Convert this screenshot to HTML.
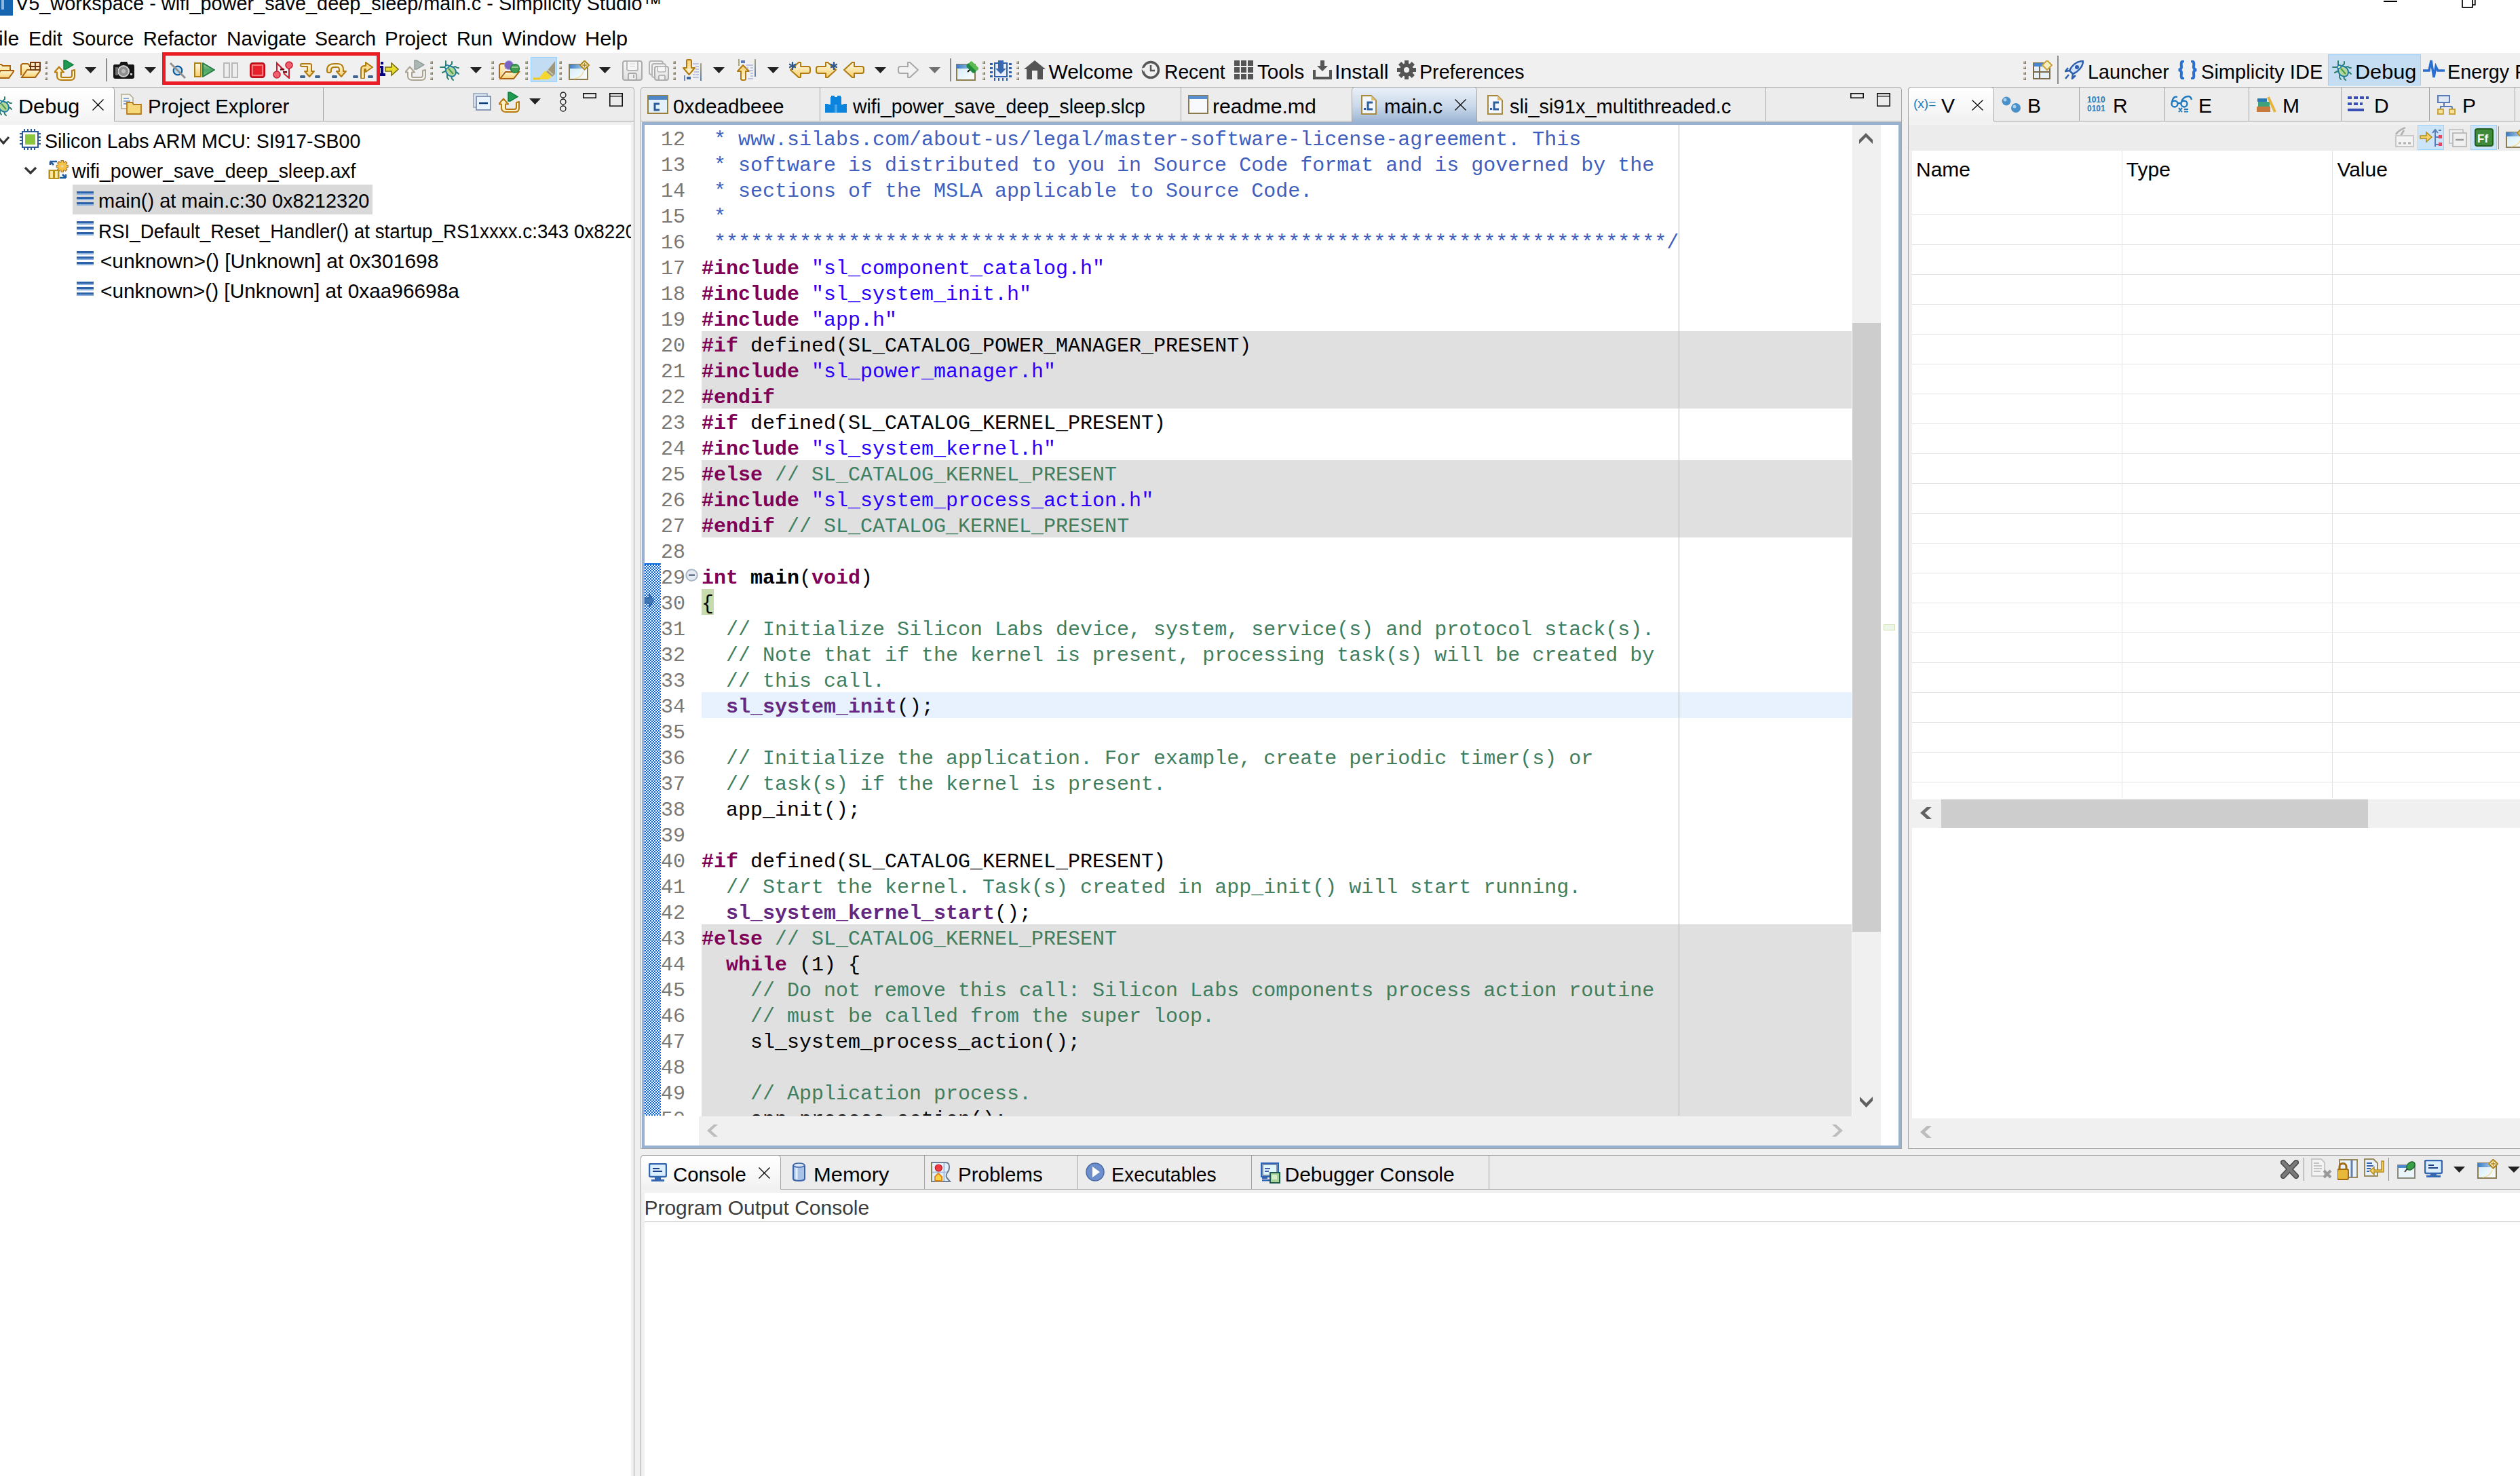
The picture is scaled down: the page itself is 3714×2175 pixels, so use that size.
<!DOCTYPE html><html><head><meta charset="utf-8"><title>Simplicity Studio</title><style>
*{margin:0;padding:0;box-sizing:border-box}
html,body{width:3714px;height:2175px;overflow:hidden;background:#fff}
body{position:relative;font-family:"Liberation Sans",sans-serif}
body>div,body>svg{position:absolute;white-space:pre}
.code{font-family:"Liberation Mono",monospace;font-size:30px;line-height:38px}
.k{color:#7f0055;font-weight:bold}
.s{color:#2a00ff}
.c{color:#3f7f5f}
.d{color:#3f5fbf}
.f{color:#642880;font-weight:bold}
.b{font-weight:bold}
</style></head><body><svg style="left:0px;top:0px" width="19" height="23" viewBox="0 0 19 23"><rect width="19" height="23" fill="#1565b0"/><rect x="2" y="0" width="4" height="14" fill="#8fb8e0"/></svg>
<div style="left:23.0px;top:-10px;font-size:30px;line-height:30px;color:#000;font-weight:normal;transform:scaleX(0.9615);transform-origin:0 0;">V5_workspace - wifi_power_save_deep_sleep/main.c - Simplicity Studio™</div>
<div style="left:3513px;top:1px;width:20px;height:2px;background:#000;"></div>
<svg style="left:3626px;top:0px" width="23" height="13" viewBox="0 0 23 13"><path d="M3 0V10.8H18V0" fill="none" stroke="#000" stroke-width="1.7"/><path d="M18 7.1H21.8V0" fill="none" stroke="#000" stroke-width="1.7"/></svg>
<div style="left:-2.0px;top:42px;font-size:30px;line-height:30px;color:#000;font-weight:normal;transform:scaleX(1.0074);transform-origin:0 0;">ile</div>
<div style="left:41.5px;top:42px;font-size:30px;line-height:30px;color:#000;font-weight:normal;transform:scaleX(0.9600);transform-origin:0 0;">Edit</div>
<div style="left:106.0px;top:42px;font-size:30px;line-height:30px;color:#000;font-weight:normal;transform:scaleX(0.9591);transform-origin:0 0;">Source</div>
<div style="left:211.1px;top:42px;font-size:30px;line-height:30px;color:#000;font-weight:normal;transform:scaleX(0.9604);transform-origin:0 0;">Refactor</div>
<div style="left:333.6px;top:42px;font-size:30px;line-height:30px;color:#000;font-weight:normal;transform:scaleX(0.9939);transform-origin:0 0;">Navigate</div>
<div style="left:463.9px;top:42px;font-size:30px;line-height:30px;color:#000;font-weight:normal;transform:scaleX(0.9467);transform-origin:0 0;">Search</div>
<div style="left:567.0px;top:42px;font-size:30px;line-height:30px;color:#000;font-weight:normal;transform:scaleX(0.9846);transform-origin:0 0;">Project</div>
<div style="left:672.9px;top:42px;font-size:30px;line-height:30px;color:#000;font-weight:normal;transform:scaleX(0.9627);transform-origin:0 0;">Run</div>
<div style="left:739.5px;top:42px;font-size:30px;line-height:30px;color:#000;font-weight:normal;transform:scaleX(1.0206);transform-origin:0 0;">Window</div>
<div style="left:861.9px;top:42px;font-size:30px;line-height:30px;color:#000;font-weight:normal;transform:scaleX(1.0237);transform-origin:0 0;">Help</div>
<div style="left:0px;top:78px;width:3714px;height:50px;background:#f0f0f0;"></div>
<div style="left:0px;top:128px;width:3714px;height:2047px;background:#f0f0f0;"></div>
<svg style="left:0;top:0" width="0" height="0"><defs><linearGradient id="gy" x1="0" y1="0" x2="0" y2="1"><stop offset="0" stop-color="#fffbe6"/><stop offset="1" stop-color="#f6cf6a"/></linearGradient><linearGradient id="gyu" x1="0" y1="1" x2="0" y2="0"><stop offset="0" stop-color="#fffbe6"/><stop offset="1" stop-color="#f6cf6a"/></linearGradient><linearGradient id="gg" x1="0" y1="0" x2="0" y2="1"><stop offset="0" stop-color="#9fd08f"/><stop offset=".5" stop-color="#4fa86a"/><stop offset="1" stop-color="#6cbf68"/></linearGradient><linearGradient id="gfl" x1="0" y1="0" x2="0" y2="1"><stop offset="0" stop-color="#fff8d8"/><stop offset="1" stop-color="#f8d070"/></linearGradient><linearGradient id="gsv" x1="0" y1="0" x2="0" y2="1"><stop offset="0" stop-color="#fafafa"/><stop offset="1" stop-color="#dedede"/></linearGradient><linearGradient id="gwin" x1="0" y1="0" x2="1" y2="1"><stop offset="0" stop-color="#cfeaf8"/><stop offset="1" stop-color="#ffffff"/></linearGradient><linearGradient id="gtb" x1="0" y1="0" x2="1" y2="0"><stop offset="0" stop-color="#3d7cc4"/><stop offset="1" stop-color="#a9cdea"/></linearGradient><linearGradient id="gbar" x1="0" y1="0" x2="0" y2="1"><stop offset="0" stop-color="#a9a57a"/><stop offset="1" stop-color="#5a7ea8"/></linearGradient></defs></svg>
<div style="left:-8px;top:128px;width:943px;height:2072px;border-top:1px solid #a5a5a5;border-left:0;border-right:1px solid #a5a5a5;border-radius:0 5px 0 0;background:#ececec"></div>
<div style="left:-8px;top:178px;width:943px;height:1px;background:#a5a5a5;"></div>
<div style="left:-8px;top:179px;width:942px;height:2021px;background:#f0f0f0;"></div>
<div style="left:0px;top:184px;width:930px;height:2000px;background:#fff;"></div>
<div style="left:-8px;top:128px;width:177px;height:51px;border-top:1px solid #a5a5a5;border-right:1px solid #a5a5a5;border-radius:0 5px 0 0;background:linear-gradient(#fff,#f8f8f8 70%,#f3f3f3)"></div>
<div style="left:0px;top:179px;width:930px;height:5px;background:#f0f0f0;"></div>
<div style="left:0px;top:178px;width:168px;height:6px;background:#f2f2f2;"></div>
<div style="left:944px;top:128px;width:1859px;height:1565px;border-top:1px solid #a5a5a5;border-left:1px solid #a5a5a5;border-right:1px solid #a5a5a5;border-radius:5px 5px 0 0;background:#ececec"></div>
<div style="left:944px;top:178px;width:1859px;height:1px;background:#a5a5a5;"></div>
<div style="left:945px;top:179px;width:1857px;height:1514px;background:#f0f0f0;"></div>
<div style="left:946px;top:180px;width:1856px;height:1512px;background:#98b1d1;"></div>
<div style="left:950px;top:184px;width:1848px;height:1504px;background:#fff;"></div>
<div style="left:1992px;top:128px;width:185px;height:52px;border:1px solid #a5a5a5;border-bottom:0;border-radius:5px 5px 0 0;background:linear-gradient(#eaf0f8,#c9d8ea 55%,#9bb4d3)"></div>
<div style="left:2812px;top:128px;width:918px;height:1565px;border-top:1px solid #a5a5a5;border-left:1px solid #a5a5a5;border-right:0;border-radius:5px 0 0 0;background:#ececec"></div>
<div style="left:2812px;top:178px;width:918px;height:1px;background:#a5a5a5;"></div>
<div style="left:2813px;top:179px;width:917px;height:1514px;background:#f0f0f0;"></div>
<div style="left:2812px;top:128px;width:127px;height:51px;border-top:1px solid #a5a5a5;border-left:1px solid #a5a5a5;border-right:1px solid #a5a5a5;border-radius:5px 5px 0 0;background:linear-gradient(#fff,#f6f6f6 70%,#f0f0f0)"></div>
<div style="left:2813px;top:179px;width:125px;height:5px;background:#f2f2f2;"></div>
<div style="left:2813px;top:184px;width:920px;height:38px;background:#ececec;"></div>
<div style="left:2818px;top:222px;width:900px;height:1470px;background:#fff;"></div>
<div style="left:944px;top:1702px;width:2786px;height:498px;border-top:1px solid #a5a5a5;border-left:1px solid #a5a5a5;border-right:0;border-radius:5px 0 0 0;background:#ececec"></div>
<div style="left:944px;top:1752px;width:2786px;height:1px;background:#a5a5a5;"></div>
<div style="left:945px;top:1753px;width:2785px;height:447px;background:#f0f0f0;"></div>
<div style="left:944px;top:1702px;width:207px;height:51px;border-top:1px solid #a5a5a5;border-left:1px solid #a5a5a5;border-right:1px solid #a5a5a5;border-radius:5px 5px 0 0;background:linear-gradient(#fff,#f6f6f6 70%,#f0f0f0)"></div>
<div style="left:945px;top:1753px;width:206px;height:5px;background:#f2f2f2;"></div>
<div style="left:950px;top:1758px;width:2780px;height:420px;background:#fff;"></div>
<div style="left:476px;top:129px;width:1px;height:49px;background:#a5a5a5;"></div>
<div style="left:1208px;top:129px;width:1px;height:49px;background:#a5a5a5;"></div>
<div style="left:1740px;top:129px;width:1px;height:49px;background:#a5a5a5;"></div>
<div style="left:2602px;top:129px;width:1px;height:49px;background:#a5a5a5;"></div>
<div style="left:3064px;top:129px;width:1px;height:49px;background:#a5a5a5;"></div>
<div style="left:3190px;top:129px;width:1px;height:49px;background:#a5a5a5;"></div>
<div style="left:3314px;top:129px;width:1px;height:49px;background:#a5a5a5;"></div>
<div style="left:3450px;top:129px;width:1px;height:49px;background:#a5a5a5;"></div>
<div style="left:3580px;top:129px;width:1px;height:49px;background:#a5a5a5;"></div>
<div style="left:3706px;top:129px;width:1px;height:49px;background:#a5a5a5;"></div>
<div style="left:1362px;top:1703px;width:1px;height:49px;background:#a5a5a5;"></div>
<div style="left:1588px;top:1703px;width:1px;height:49px;background:#a5a5a5;"></div>
<div style="left:1844px;top:1703px;width:1px;height:49px;background:#a5a5a5;"></div>
<div style="left:2194px;top:1703px;width:1px;height:49px;background:#a5a5a5;"></div>
<svg style="left:-11px;top:141px" width="30" height="30" viewBox="0 0 30 30"><g stroke="#2f7f6f" stroke-width="2" fill="none" stroke-linecap="round"><path d="M9 8V1M15 8L18 5V2M8 10H1M8 16L4 18M20 10L23 9L26 11H28M22 17L26 18L28 20M11 21V25L13 28M17 23L18 27L20 29"/></g><ellipse cx="16.5" cy="16" rx="6.8" ry="8.3" transform="rotate(-42 16.5 16)" fill="#b2d89c" stroke="#1e7aa0" stroke-width="2"/><ellipse cx="10.5" cy="9.5" rx="3" ry="2.2" transform="rotate(-30 10.5 9.5)" fill="#d8ecc8" stroke="#1e7aa0" stroke-width="1.6"/><path d="M13 12L20 20" stroke="#4c9a4a" stroke-width="2"/></svg>
<div style="left:27.2px;top:142px;font-size:30px;line-height:30px;color:#000;font-weight:normal;transform:scaleX(1.0212);transform-origin:0 0;">Debug</div>
<svg style="left:136px;top:146px" width="17" height="17" viewBox="0 0 17 17"><path d="M0.5 0.5L16.5 16.5M16.5 0.5L0.5 16.5" stroke="#000" stroke-width="1.25"/></svg>
<svg style="left:178px;top:138px" width="31" height="31" viewBox="0 0 31 31"><path d="M1 1H13L18 6V22H1Z" fill="#f4f4f0" stroke="#b0a890" stroke-width="1.5"/><path d="M4 7H12M4 11H14M4 15H10" stroke="#6a8cc8" stroke-width="1.5"/><path d="M9 13H17L19 16H30V30H9Z" fill="#f6d77a" stroke="#b47a1e" stroke-width="1.8"/></svg>
<div style="left:217.6px;top:142px;font-size:30px;line-height:30px;color:#000;font-weight:normal;transform:scaleX(0.9763);transform-origin:0 0;">Project Explorer</div>
<svg style="left:697px;top:137px" width="27" height="26" viewBox="0 0 27 26"><rect x="1" y="1" width="20" height="20" fill="#dfe8f3" stroke="#a5b3c8" stroke-width="2"/><rect x="5" y="5" width="21" height="20" fill="#e9f4fd" stroke="#8a9ab5" stroke-width="2"/><path d="M9 15H22" stroke="#0b3c7a" stroke-width="2.5"/></svg>
<svg style="left:735px;top:135px" width="31" height="31" viewBox="0 0 31 31"><path d="M14 1H17L28 7.5L17 14H14Z" fill="#1f9a50" stroke="#0a7a3a" stroke-width="1.4"/><path d="M7 10.5L14 18.5H10V24.5Q10 26 12 26H23Q26 26 26 23V16L30 15V24Q30 30 24 30H11Q4 30 4 24V18.5H0Z" fill="#fff3c8" stroke="#b7780f" stroke-width="2" stroke-linejoin="round"/></svg>
<svg style="left:780px;top:145px" width="17" height="9" viewBox="0 0 17 9"><path d="M0 0H17L8.5 9Z" fill="#222"/></svg>
<svg style="left:824px;top:135px" width="12" height="30" viewBox="0 0 12 30"><g fill="none" stroke="#111" stroke-width="1.3"><circle cx="6" cy="5" r="4"/><circle cx="6" cy="15" r="4"/><circle cx="6" cy="25" r="4"/></g></svg>
<svg style="left:859px;top:137px" width="20" height="8" viewBox="0 0 20 8"><rect x="0.8" y="0.8" width="18.4" height="6.4" fill="none" stroke="#111" stroke-width="1.6"/></svg>
<svg style="left:898px;top:137px" width="20" height="20" viewBox="0 0 20 20"><rect x="0.8" y="0.8" width="18.4" height="18.4" fill="none" stroke="#111" stroke-width="1.6"/><path d="M1 4.8H19" stroke="#111" stroke-width="1.3"/></svg>
<svg style="left:954px;top:140px" width="31" height="28" viewBox="0 0 31 28"><rect x="1" y="1" width="29" height="26" fill="#e3f1fb" stroke="#9a7f3a" stroke-width="2"/><rect x="1" y="1" width="29" height="6" fill="#4e86c6"/><path d="M18 13H11V22H18" fill="none" stroke="#2a5a9a" stroke-width="3"/></svg>
<div style="left:991.5px;top:142px;font-size:30px;line-height:30px;color:#000;font-weight:normal;transform:scaleX(0.9908);transform-origin:0 0;">0xdeadbeee</div>
<svg style="left:1215px;top:141px" width="34" height="26" viewBox="0 0 34 26"><rect x="9" y="2" width="16" height="12" fill="#0b84de"/><rect x="10" y="0" width="5" height="3" fill="#0b84de"/><rect x="19" y="0" width="5" height="3" fill="#0b84de"/><rect x="1" y="13" width="32" height="12" fill="#0b84de"/><rect x="1" y="12" width="5" height="2" fill="#0b84de"/><rect x="28" y="12" width="5" height="2" fill="#0b84de"/><rect x="15" y="13" width="4" height="12" fill="#4aa6ea"/></svg>
<div style="left:1257.0px;top:142px;font-size:30px;line-height:30px;color:#000;font-weight:normal;transform:scaleX(0.9460);transform-origin:0 0;">wifi_power_save_deep_sleep.slcp</div>
<svg style="left:1751px;top:140px" width="30" height="28" viewBox="0 0 30 28"><rect x="1" y="1" width="28" height="26" fill="#f7f9fc" stroke="#8a7a50" stroke-width="2"/><rect x="1" y="1" width="28" height="5" fill="#5a8fd0"/></svg>
<div style="left:1786.9px;top:142px;font-size:30px;line-height:30px;color:#000;font-weight:normal;transform:scaleX(1.0074);transform-origin:0 0;">readme.md</div>
<svg style="left:2006px;top:140px" width="23" height="29" viewBox="0 0 23 29"><path d="M1 1H15L22 8V28H1Z" fill="#f4f7fb" stroke="#a88a3e" stroke-width="2"/><path d="M15 1V8H22" fill="#e0c070"/><path d="M17 11H10V21H17" fill="none" stroke="#2b5e9e" stroke-width="3"/><rect x="4" y="19" width="3" height="3" fill="#2b5e9e"/></svg>
<div style="left:2039.6px;top:142px;font-size:30px;line-height:30px;color:#000;font-weight:normal;transform:scaleX(0.9756);transform-origin:0 0;">main.c</div>
<svg style="left:2144px;top:146px" width="17" height="17" viewBox="0 0 17 17"><path d="M0.5 0.5L16.5 16.5M16.5 0.5L0.5 16.5" stroke="#000" stroke-width="1.25"/></svg>
<svg style="left:2192px;top:140px" width="23" height="29" viewBox="0 0 23 29"><path d="M1 1H15L22 8V28H1Z" fill="#f4f7fb" stroke="#a88a3e" stroke-width="2"/><path d="M15 1V8H22" fill="#e0c070"/><path d="M17 11H10V21H17" fill="none" stroke="#2b5e9e" stroke-width="3"/><rect x="4" y="19" width="3" height="3" fill="#2b5e9e"/></svg>
<div style="left:2225.0px;top:142px;font-size:30px;line-height:30px;color:#000;font-weight:normal;transform:scaleX(0.9684);transform-origin:0 0;">sli_si91x_multithreaded.c</div>
<svg style="left:2727px;top:137px" width="20" height="8" viewBox="0 0 20 8"><rect x="0.8" y="0.8" width="18.4" height="6.4" fill="none" stroke="#111" stroke-width="1.6"/></svg>
<svg style="left:2766px;top:137px" width="20" height="20" viewBox="0 0 20 20"><rect x="0.8" y="0.8" width="18.4" height="18.4" fill="none" stroke="#111" stroke-width="1.6"/><path d="M1 4.8H19" stroke="#111" stroke-width="1.3"/></svg>
<svg style="left:2820px;top:143px" width="33" height="20" viewBox="0 0 33 20"><text x="0" y="16" font-family="Liberation Sans" font-size="19" fill="#1a7ac0">(x)=</text></svg>
<div style="left:2861.0px;top:141px;font-size:30px;line-height:30px;color:#000;font-weight:normal;">V</div>
<svg style="left:2906px;top:147px" width="17" height="16" viewBox="0 0 17 16"><path d="M0.5 0.5L16.5 15.5M16.5 0.5L0.5 15.5" stroke="#000" stroke-width="1.25"/></svg>
<svg style="left:2950px;top:142px" width="29" height="30" viewBox="0 0 29 30"><circle cx="7" cy="7" r="6.5" fill="#4a90c8"/><circle cx="21" cy="17" r="7" fill="#4a90c8"/><circle cx="5" cy="5" r="2.5" fill="#a8d0f0"/><circle cx="19" cy="15" r="2.5" fill="#a8d0f0"/></svg>
<div style="left:2988.0px;top:141px;font-size:30px;line-height:30px;color:#000;font-weight:normal;">B</div>
<svg style="left:3076px;top:141px" width="31" height="24" viewBox="0 0 31 24"><text x="0" y="10" font-family="Liberation Sans" font-size="12" font-weight="bold" fill="#2a7ab8">1010</text><text x="0" y="23" font-family="Liberation Sans" font-size="12" font-weight="bold" fill="#2a7ab8">0101</text></svg>
<div style="left:3114.0px;top:141px;font-size:30px;line-height:30px;color:#000;font-weight:normal;">R</div>
<svg style="left:3199px;top:140px" width="34" height="28" viewBox="0 0 34 28"><g fill="none" stroke="#1f7ac0" stroke-width="2.4"><circle cx="6" cy="13" r="4.5"/><circle cx="20" cy="13" r="4.5"/><path d="M10.5 12H15.5M2 10Q4 1 10 3M16 10Q19 2 26 2Q30 2 31 7"/></g><path d="M12 19L17 25M17 19L12 25M20 21H26M20 24.5H26" stroke="#1f7ac0" stroke-width="2"/></svg>
<div style="left:3240.0px;top:141px;font-size:30px;line-height:30px;color:#000;font-weight:normal;">E</div>
<svg style="left:3326px;top:142px" width="30" height="25" viewBox="0 0 30 25"><rect x="0" y="15" width="20" height="8" fill="#c87a3e"/><rect x="2" y="8" width="17" height="7" fill="#3ea37a"/><rect x="1" y="3" width="14" height="5" fill="#2a7ab8"/><path d="M17 1L27 23" stroke="#e7b33c" stroke-width="4"/></svg>
<div style="left:3364.0px;top:141px;font-size:30px;line-height:30px;color:#000;font-weight:normal;">M</div>
<svg style="left:3460px;top:142px" width="32" height="22" viewBox="0 0 32 22"><g fill="#3a4fb5"><rect x="0" y="0" width="6" height="4"/><rect x="9" y="0" width="6" height="4"/><rect x="18" y="0" width="6" height="4"/><rect x="27" y="0" width="4" height="4"/><rect x="0" y="9" width="6" height="4"/><rect x="9" y="9" width="6" height="4"/><rect x="18" y="9" width="4" height="4"/><rect x="0" y="18" width="24" height="4"/></g></svg>
<div style="left:3499.0px;top:141px;font-size:30px;line-height:30px;color:#000;font-weight:normal;">D</div>
<svg style="left:3592px;top:140px" width="29" height="30" viewBox="0 0 29 30"><rect x="1" y="1" width="17" height="10" fill="#dfe8f5" stroke="#5a7ab8" stroke-width="2"/><path d="M10 11V17M4 17H22M5 17V21M22 17V21" stroke="#5a7ab8" stroke-width="2"/><rect x="1" y="21" width="8" height="7" fill="#f7e39b" stroke="#c9a43c" stroke-width="2"/><rect x="18" y="21" width="8" height="7" fill="#f7e39b" stroke="#c9a43c" stroke-width="2"/></svg>
<div style="left:3629.0px;top:141px;font-size:30px;line-height:30px;color:#000;font-weight:normal;">P</div>
<svg style="left:956px;top:1714px" width="27" height="27" viewBox="0 0 27 27"><rect x="1" y="1" width="25" height="19" rx="2" fill="#dbeefc" stroke="#3566b0" stroke-width="2.5"/><path d="M6 8H16M6 12H20" stroke="#1d3f86" stroke-width="2"/><rect x="9" y="21" width="9" height="3" fill="#3566b0"/><rect x="4" y="24" width="19" height="3" fill="#3566b0"/></svg>
<div style="left:992.0px;top:1716px;font-size:30px;line-height:30px;color:#000;font-weight:normal;transform:scaleX(0.9787);transform-origin:0 0;">Console</div>
<svg style="left:1118px;top:1720px" width="17" height="17" viewBox="0 0 17 17"><path d="M0.5 0.5L16.5 16.5M16.5 0.5L0.5 16.5" stroke="#000" stroke-width="1.25"/></svg>
<svg style="left:1168px;top:1712px" width="19" height="31" viewBox="0 0 19 31"><rect x="1" y="3" width="17" height="25" rx="8" ry="3" fill="#a9c3e8" stroke="#3a64a8" stroke-width="2"/><ellipse cx="9.5" cy="5" rx="8" ry="3" fill="#d9e6f6" stroke="#3a64a8" stroke-width="1.5"/><path d="M6 9V26" stroke="#e6f0fb" stroke-width="3"/></svg>
<div style="left:1199.4px;top:1716px;font-size:30px;line-height:30px;color:#000;font-weight:normal;transform:scaleX(1.0292);transform-origin:0 0;">Memory</div>
<svg style="left:1372px;top:1712px" width="30" height="30" viewBox="0 0 30 30"><path d="M1 1H22Q27 1 27 8Q27 13 24 16Q22 19 23 23L28 29H1Z" fill="#e2f1fb" stroke="#6f7f96" stroke-width="2"/><path d="M1 1V29" stroke="#8a8450" stroke-width="2"/><path d="M2 15.5H24M19.5 2V28" stroke="#a9c0e2" stroke-width="2"/><circle cx="11.3" cy="9" r="5" fill="#ec3c44" stroke="#c8121a" stroke-width="1.2"/><path d="M6 28V22L11 17L16 22V28Z" fill="#fad448" stroke="#e38a1a" stroke-width="2"/></svg>
<div style="left:1411.8px;top:1716px;font-size:30px;line-height:30px;color:#000;font-weight:normal;transform:scaleX(0.9839);transform-origin:0 0;">Problems</div>
<svg style="left:1600px;top:1713px" width="28" height="28" viewBox="0 0 28 28"><circle cx="14" cy="14" r="13" fill="#6d8fcc" stroke="#4a6aa8" stroke-width="1.5"/><path d="M10 6L21 14L10 22Z" fill="#fff"/></svg>
<div style="left:1637.6px;top:1716px;font-size:30px;line-height:30px;color:#000;font-weight:normal;transform:scaleX(0.9472);transform-origin:0 0;">Executables</div>
<svg style="left:1858px;top:1713px" width="29" height="31" viewBox="0 0 29 31"><rect x="1" y="1" width="25" height="20" fill="#dff6fd" stroke="#2d62b8" stroke-width="2"/><rect x="3" y="3" width="21" height="16" fill="none" stroke="#5a6f96" stroke-width="1.5"/><path d="M6 9H14M6 13H12" stroke="#4a5cae" stroke-width="2"/><rect x="2" y="22" width="8" height="2" fill="#3a62a8"/><rect x="2" y="25" width="14" height="2.5" fill="#2d62b8"/><rect x="14" y="15" width="14" height="15" fill="#a8d49a" stroke="#1e5a50" stroke-width="2"/><rect x="17" y="18" width="7" height="7" fill="#d8ecd0"/></svg>
<div style="left:1893.5px;top:1716px;font-size:30px;line-height:30px;color:#000;font-weight:normal;">Debugger Console</div>
<svg style="left:-9px;top:92px" width="30" height="24" viewBox="0 0 30 24"><path d="M1 20V5L3 3H11L13 5H24V12" fill="url(#gfl)" stroke="#b0680e" stroke-width="2"/><path d="M10 12H30L22 23H2Z" fill="url(#gfl)" stroke="#a8600e" stroke-width="2"/></svg>
<svg style="left:30px;top:91px" width="30" height="24" viewBox="0 0 30 24"><path d="M1 20V5L3 3H11L13 5H24V12" fill="url(#gfl)" stroke="#b0680e" stroke-width="2"/><path d="M10 12H30L22 23H2Z" fill="url(#gfl)" stroke="#a8600e" stroke-width="2"/><rect x="15" y="1" width="14" height="11" fill="#f8e6c0" stroke="#7a3e10" stroke-width="2"/><path d="M22 0V12M13 7H31" stroke="#6a3010" stroke-width="1.8"/></svg>
<svg style="left:66px;top:90px" width="4" height="28" viewBox="0 0 4 28"><rect x="0" y="0" width="4" height="4" fill="#a59f8c"/><rect x="0" y="0" width="2" height="2" fill="#d8d2c4"/><rect x="2" y="2" width="2" height="2" fill="#7f7762"/><rect x="0" y="8" width="4" height="4" fill="#a59f8c"/><rect x="0" y="8" width="2" height="2" fill="#d8d2c4"/><rect x="2" y="10" width="2" height="2" fill="#7f7762"/><rect x="0" y="16" width="4" height="4" fill="#a59f8c"/><rect x="0" y="16" width="2" height="2" fill="#d8d2c4"/><rect x="2" y="18" width="2" height="2" fill="#7f7762"/><rect x="0" y="24" width="4" height="4" fill="#a59f8c"/><rect x="0" y="24" width="2" height="2" fill="#d8d2c4"/><rect x="2" y="26" width="2" height="2" fill="#7f7762"/></svg>
<svg style="left:80px;top:88px" width="31" height="31" viewBox="0 0 31 31"><path d="M14 1H17L28 7.5L17 14H14Z" fill="#1f9a50" stroke="#0a7a3a" stroke-width="1.4"/><path d="M7 10.5L14 18.5H10V24.5Q10 26 12 26H23Q26 26 26 23V16L30 15V24Q30 30 24 30H11Q4 30 4 24V18.5H0Z" fill="#fff3c8" stroke="#b7780f" stroke-width="2" stroke-linejoin="round"/></svg>
<svg style="left:125px;top:99px" width="17" height="9" viewBox="0 0 17 9"><path d="M0 0H17L8.5 9Z" fill="#222"/></svg>
<div style="left:156px;top:86px;width:2px;height:34px;background:#8c8c8c;"></div>
<svg style="left:166px;top:89px" width="33" height="28" viewBox="0 0 33 28"><path d="M3 6H10L12 2H21L23 6H30Q32 6 32 9V24Q32 27 29 27H4Q1 27 1 24V9Q1 6 3 6Z" fill="#151515"/><circle cx="16" cy="16" r="8" fill="#8f8f8f" stroke="#d0d0d0" stroke-width="2"/><circle cx="16" cy="16" r="3" fill="#bbb"/><rect x="4" y="10" width="4" height="12" fill="#6f6f6f"/><rect x="26" y="19" width="3" height="3" fill="#cfcfcf"/></svg>
<svg style="left:213px;top:99px" width="17" height="9" viewBox="0 0 17 9"><path d="M0 0H17L8.5 9Z" fill="#222"/></svg>
<div style="left:239px;top:77px;width:321px;height:48px;border:5px solid #ec1c24"></div>
<svg style="left:250px;top:92px" width="24" height="24" viewBox="0 0 24 24"><circle cx="12" cy="12" r="6.3" fill="#bddbf0" stroke="#0f5a9a" stroke-width="2.2"/><path d="M1 1L23 23" stroke="#8f8f8f" stroke-width="3"/></svg>
<svg style="left:285px;top:92px" width="32" height="22" viewBox="0 0 32 22"><rect x="2" y="1" width="9" height="20" fill="url(#gy)" stroke="#a88010" stroke-width="2"/><path d="M14 1L31 11L14 21Z" fill="url(#gg)" stroke="#2a7a4a" stroke-width="2" stroke-linejoin="round"/></svg>
<svg style="left:328px;top:92px" width="24" height="24" viewBox="0 0 24 24"><rect x="2" y="1" width="8" height="21" fill="#efefef" stroke="#b8b8b8" stroke-width="2"/><rect x="14" y="1" width="8" height="21" fill="#efefef" stroke="#b8b8b8" stroke-width="2"/></svg>
<svg style="left:368px;top:92px" width="23" height="24" viewBox="0 0 23 24"><rect x="1" y="1" width="21" height="21" rx="3.5" fill="#e8202a" stroke="#b8101a" stroke-width="2"/><rect x="4" y="4" width="15" height="15" fill="none" stroke="#f79a9a" stroke-width="1.5"/></svg>
<svg style="left:402px;top:90px" width="30" height="26" viewBox="0 0 30 26"><path d="M6 18V3L16 13M16 18L24 25V8" fill="none" stroke="#c81e30" stroke-width="2"/><rect x="11" y="11" width="6" height="2.5" fill="#7a0010"/><rect x="15" y="15" width="6" height="2.5" fill="#7a0010"/><circle cx="6" cy="20" r="5" fill="#f06070" stroke="#c81e30" stroke-width="1.6"/><circle cx="24" cy="6" r="5" fill="#f06070" stroke="#c81e30" stroke-width="1.6"/></svg>
<svg style="left:442px;top:91px" width="31" height="25" viewBox="0 0 31 25"><path d="M3 3H15Q17 3 17 5V14H21L14 22L7 14H11V7H3Q1 7 1 5Q1 3 3 3Z" fill="url(#gy)" stroke="#b07a10" stroke-width="2" stroke-linejoin="round"/><rect x="0" y="20" width="8" height="4" rx="1.5" fill="#3f6593"/><rect x="22" y="20" width="8" height="4" rx="1.5" fill="#3f6593"/></svg>
<svg style="left:481px;top:91px" width="31" height="25" viewBox="0 0 31 25"><path d="M1 14V12Q1 3 12 3H17Q25 3 25 12V14H29L22 22L15 14H19V12Q19 8 16 8H12Q7 8 7 12V14Q7 16 4 16Q1 16 1 14Z" fill="url(#gy)" stroke="#b07a10" stroke-width="2" stroke-linejoin="round"/><rect x="8" y="20" width="8" height="4" rx="1.5" fill="#3f6593"/></svg>
<svg style="left:520px;top:91px" width="31" height="25" viewBox="0 0 31 25"><path d="M12 23V12Q12 6 17 6H19V1L29 8L19 15V11H17Q17 11 17 12V23Q17 25 14.5 25Q12 25 12 23Z" fill="url(#gyu)" stroke="#b07a10" stroke-width="2" stroke-linejoin="round"/><rect x="0" y="20" width="8" height="4" rx="1.5" fill="#3f6593"/><rect x="22" y="20" width="8" height="4" rx="1.5" fill="#3f6593"/></svg>
<svg style="left:559px;top:90px" width="30" height="24" viewBox="0 0 30 24"><path d="M2 1H6V5H2ZM1 7H6V18H9V22H1V18H2V10H1Z" fill="#000080"/><path d="M9 9H18V3L28 12L18 21V15H9Z" fill="#e8dc30" stroke="#7a6a10" stroke-width="1.6"/></svg>
<svg style="left:597px;top:88px" width="31" height="31" viewBox="0 0 31 31"><path d="M14 1H17L28 7.5L17 14H14Z" fill="#aab7b2" stroke="#8a9a94" stroke-width="1.4"/><path d="M7 10.5L14 18.5H10V24.5Q10 26 12 26H23Q26 26 26 23V16L30 15V24Q30 30 24 30H11Q4 30 4 24V18.5H0Z" fill="#faf8f2" stroke="#aaa393" stroke-width="2" stroke-linejoin="round"/></svg>
<svg style="left:634px;top:90px" width="4" height="28" viewBox="0 0 4 28"><rect x="0" y="0" width="4" height="4" fill="#a59f8c"/><rect x="0" y="0" width="2" height="2" fill="#d8d2c4"/><rect x="2" y="2" width="2" height="2" fill="#7f7762"/><rect x="0" y="8" width="4" height="4" fill="#a59f8c"/><rect x="0" y="8" width="2" height="2" fill="#d8d2c4"/><rect x="2" y="10" width="2" height="2" fill="#7f7762"/><rect x="0" y="16" width="4" height="4" fill="#a59f8c"/><rect x="0" y="16" width="2" height="2" fill="#d8d2c4"/><rect x="2" y="18" width="2" height="2" fill="#7f7762"/><rect x="0" y="24" width="4" height="4" fill="#a59f8c"/><rect x="0" y="24" width="2" height="2" fill="#d8d2c4"/><rect x="2" y="26" width="2" height="2" fill="#7f7762"/></svg>
<svg style="left:648px;top:89px" width="30" height="30" viewBox="0 0 30 30"><g stroke="#2f7f6f" stroke-width="2" fill="none" stroke-linecap="round"><path d="M9 8V1M15 8L18 5V2M8 10H1M8 16L4 18M20 10L23 9L26 11H28M22 17L26 18L28 20M11 21V25L13 28M17 23L18 27L20 29"/></g><ellipse cx="16.5" cy="16" rx="6.8" ry="8.3" transform="rotate(-42 16.5 16)" fill="#b2d89c" stroke="#1e7aa0" stroke-width="2"/><ellipse cx="10.5" cy="9.5" rx="3" ry="2.2" transform="rotate(-30 10.5 9.5)" fill="#d8ecc8" stroke="#1e7aa0" stroke-width="1.6"/><path d="M13 12L20 20" stroke="#4c9a4a" stroke-width="2"/></svg>
<svg style="left:693px;top:99px" width="17" height="9" viewBox="0 0 17 9"><path d="M0 0H17L8.5 9Z" fill="#222"/></svg>
<svg style="left:724px;top:90px" width="4" height="28" viewBox="0 0 4 28"><rect x="0" y="0" width="4" height="4" fill="#a59f8c"/><rect x="0" y="0" width="2" height="2" fill="#d8d2c4"/><rect x="2" y="2" width="2" height="2" fill="#7f7762"/><rect x="0" y="8" width="4" height="4" fill="#a59f8c"/><rect x="0" y="8" width="2" height="2" fill="#d8d2c4"/><rect x="2" y="10" width="2" height="2" fill="#7f7762"/><rect x="0" y="16" width="4" height="4" fill="#a59f8c"/><rect x="0" y="16" width="2" height="2" fill="#d8d2c4"/><rect x="2" y="18" width="2" height="2" fill="#7f7762"/><rect x="0" y="24" width="4" height="4" fill="#a59f8c"/><rect x="0" y="24" width="2" height="2" fill="#d8d2c4"/><rect x="2" y="26" width="2" height="2" fill="#7f7762"/></svg>
<svg style="left:735px;top:89px" width="33" height="29" viewBox="0 0 33 29"><path d="M1 26V7L3 5H10V12" fill="url(#gfl)" stroke="#b0680e" stroke-width="2"/><path d="M10 17H30L22 27H2Z" fill="url(#gfl)" stroke="#a8600e" stroke-width="2"/><circle cx="15" cy="7" r="6.5" fill="#7a66c0" stroke="#b0a0e0" stroke-width="1"/><circle cx="24" cy="12" r="6.5" fill="#3e9a52" stroke="#1a7a3a" stroke-width="1.2"/><path d="M19 10H29" stroke="#b8dca0" stroke-width="1.5"/></svg>
<svg style="left:774px;top:90px" width="4" height="28" viewBox="0 0 4 28"><rect x="0" y="0" width="4" height="4" fill="#a59f8c"/><rect x="0" y="0" width="2" height="2" fill="#d8d2c4"/><rect x="2" y="2" width="2" height="2" fill="#7f7762"/><rect x="0" y="8" width="4" height="4" fill="#a59f8c"/><rect x="0" y="8" width="2" height="2" fill="#d8d2c4"/><rect x="2" y="10" width="2" height="2" fill="#7f7762"/><rect x="0" y="16" width="4" height="4" fill="#a59f8c"/><rect x="0" y="16" width="2" height="2" fill="#d8d2c4"/><rect x="2" y="18" width="2" height="2" fill="#7f7762"/><rect x="0" y="24" width="4" height="4" fill="#a59f8c"/><rect x="0" y="24" width="2" height="2" fill="#d8d2c4"/><rect x="2" y="26" width="2" height="2" fill="#7f7762"/></svg>
<div style="left:782px;top:84px;width:39px;height:37px;background:#c2ddf3;border:1px solid #99d1ff"></div>
<svg style="left:786px;top:89px" width="33" height="29" viewBox="0 0 33 29"><path d="M32 1V20L28 24L19 17Z" fill="#a09878"/><path d="M21 14L29 21" stroke="#d8d0b8" stroke-width="1.5"/><path d="M17 15L27 24L22 28H8L10 24Z" fill="#f4d830"/><path d="M0 27H10" stroke="#f0c820" stroke-width="3"/></svg>
<svg style="left:824px;top:90px" width="4" height="28" viewBox="0 0 4 28"><rect x="0" y="0" width="4" height="4" fill="#a59f8c"/><rect x="0" y="0" width="2" height="2" fill="#d8d2c4"/><rect x="2" y="2" width="2" height="2" fill="#7f7762"/><rect x="0" y="8" width="4" height="4" fill="#a59f8c"/><rect x="0" y="8" width="2" height="2" fill="#d8d2c4"/><rect x="2" y="10" width="2" height="2" fill="#7f7762"/><rect x="0" y="16" width="4" height="4" fill="#a59f8c"/><rect x="0" y="16" width="2" height="2" fill="#d8d2c4"/><rect x="2" y="18" width="2" height="2" fill="#7f7762"/><rect x="0" y="24" width="4" height="4" fill="#a59f8c"/><rect x="0" y="24" width="2" height="2" fill="#d8d2c4"/><rect x="2" y="26" width="2" height="2" fill="#7f7762"/></svg>
<svg style="left:838px;top:89px" width="31" height="29" viewBox="0 0 31 29"><rect x="1" y="6" width="27" height="22" fill="url(#gwin)" stroke="#8c7c50" stroke-width="2"/><rect x="1" y="6" width="22" height="6" fill="url(#gtb)"/><path d="M23.5 0.5L30 7L23.5 13.5L17 7Z" fill="#fbf3cf" stroke="#b08820" stroke-width="2"/><path d="M23.5 3.5V10.5M20 7H27" stroke="#b08820" stroke-width="1.4"/><path d="M22 16Q20 25 8 27" fill="none" stroke="#f2dfa0" stroke-width="1.5"/></svg>
<svg style="left:883px;top:99px" width="17" height="9" viewBox="0 0 17 9"><path d="M0 0H17L8.5 9Z" fill="#222"/></svg>
<svg style="left:917px;top:89px" width="30" height="30" viewBox="0 0 30 30"><rect x="1" y="1" width="28" height="28" rx="3" fill="url(#gsv)" stroke="#ababab" stroke-width="2"/><rect x="7" y="1" width="16" height="14" rx="2" fill="#f6f6f6" stroke="#b4b4b4" stroke-width="1.8"/><path d="M11 5H19M11 9H19" stroke="#dedede" stroke-width="1.5"/><rect x="9" y="19" width="12" height="10" rx="2" fill="#efefef" stroke="#a8a8a8" stroke-width="1.8"/><rect x="16" y="21" width="2" height="5" fill="#aaa"/></svg>
<svg style="left:956px;top:89px" width="30" height="30" viewBox="0 0 30 30"><rect x="1" y="1" width="20" height="20" rx="3" fill="#f2f2f2" stroke="#b4b4b4" stroke-width="2"/><rect x="5" y="5" width="20" height="20" rx="3" fill="#f2f2f2" stroke="#b4b4b4" stroke-width="2"/><rect x="9" y="9" width="20" height="20" rx="3" fill="url(#gsv)" stroke="#ababab" stroke-width="2"/><rect x="13" y="9" width="12" height="8" rx="2" fill="#f6f6f6" stroke="#b4b4b4" stroke-width="1.6"/><rect x="15" y="22" width="9" height="7" rx="1.5" fill="#efefef" stroke="#a8a8a8" stroke-width="1.6"/></svg>
<svg style="left:992px;top:90px" width="4" height="28" viewBox="0 0 4 28"><rect x="0" y="0" width="4" height="4" fill="#a59f8c"/><rect x="0" y="0" width="2" height="2" fill="#d8d2c4"/><rect x="2" y="2" width="2" height="2" fill="#7f7762"/><rect x="0" y="8" width="4" height="4" fill="#a59f8c"/><rect x="0" y="8" width="2" height="2" fill="#d8d2c4"/><rect x="2" y="10" width="2" height="2" fill="#7f7762"/><rect x="0" y="16" width="4" height="4" fill="#a59f8c"/><rect x="0" y="16" width="2" height="2" fill="#d8d2c4"/><rect x="2" y="18" width="2" height="2" fill="#7f7762"/><rect x="0" y="24" width="4" height="4" fill="#a59f8c"/><rect x="0" y="24" width="2" height="2" fill="#d8d2c4"/><rect x="2" y="26" width="2" height="2" fill="#7f7762"/></svg>
<svg style="left:1006px;top:87px" width="29" height="32" viewBox="0 0 29 32"><path d="M6 2Q6 1 8 1H11Q13 1 13 3V13H18L9.5 23L1 13H6Z" fill="url(#gyu)" stroke="#b07a10" stroke-width="2" stroke-linejoin="round"/><path d="M15 7H24M19 11H24M19 15H24M17 19H24M15 23H19M20 23H24M15 27H24" stroke="#bcc4e2" stroke-width="2"/><rect x="26" y="6" width="2" height="26" fill="url(#gbar)"/><rect x="2" y="24" width="2" height="8" fill="#6f88b0"/><rect x="6" y="26" width="6" height="4" fill="#3c64a0"/></svg>
<svg style="left:1051px;top:99px" width="17" height="9" viewBox="0 0 17 9"><path d="M0 0H17L8.5 9Z" fill="#222"/></svg>
<svg style="left:1086px;top:87px" width="28" height="32" viewBox="0 0 28 32"><path d="M9 9L1 18H6V29Q6 31 8 31H11Q13 31 13 29V18H18Z" fill="url(#gyu)" stroke="#b07a10" stroke-width="2" stroke-linejoin="round"/><path d="M14 9H24M14 13H17M20 13H24M18 17H24M20 21H24M20 25H24M16 29H24" stroke="#bcc4e2" stroke-width="2"/><rect x="26" y="0" width="2" height="26" fill="url(#gbar)"/><rect x="2" y="0" width="2" height="10" fill="#a9a57a"/><rect x="6" y="2" width="6" height="4" fill="#5a7ab8"/></svg>
<svg style="left:1131px;top:99px" width="17" height="9" viewBox="0 0 17 9"><path d="M0 0H17L8.5 9Z" fill="#222"/></svg>
<svg style="left:1163px;top:91px" width="32" height="25" viewBox="0 0 32 25"><path d="M2 12L14 1H17V7H28Q31 7 31 10V14Q31 17 28 17H17V23H14Z" fill="url(#gy)" stroke="#b07a10" stroke-width="2" stroke-linejoin="round"/><g stroke="#2d5a8e" stroke-width="2.2"><path d="M5 0V12M0 3.5L10 8.5M10 3.5L0 8.5"/></g></svg>
<svg style="left:1202px;top:91px" width="32" height="25" viewBox="0 0 32 25"><path d="M30 12L18 1H15V7H4Q1 7 1 10V14Q1 17 4 17H15V23H18Z" fill="url(#gy)" stroke="#b07a10" stroke-width="2" stroke-linejoin="round"/><g stroke="#2d5a8e" stroke-width="2.2"><path d="M27 0V12M22 3.5L32 8.5M32 3.5L22 8.5"/></g></svg>
<svg style="left:1242px;top:91px" width="32" height="25" viewBox="0 0 32 25"><path d="M2 12L14 1H17V7H28Q31 7 31 10V14Q31 17 28 17H17V23H14Z" fill="url(#gy)" stroke="#b07a10" stroke-width="2" stroke-linejoin="round"/></svg>
<svg style="left:1289px;top:99px" width="17" height="9" viewBox="0 0 17 9"><path d="M0 0H17L8.5 9Z" fill="#222"/></svg>
<svg style="left:1323px;top:91px" width="32" height="25" viewBox="0 0 32 25"><path d="M30 12L18 1H15V7H4Q1 7 1 10V14Q1 17 4 17H15V23H18Z" fill="#f2f2f2" stroke="#a8a8a8" stroke-width="2" stroke-linejoin="round"/></svg>
<svg style="left:1369px;top:99px" width="17" height="9" viewBox="0 0 17 9"><path d="M0 0H17L8.5 9Z" fill="#707070"/></svg>
<div style="left:1400px;top:86px;width:2px;height:34px;background:#8c8c8c;"></div>
<svg style="left:1409px;top:90px" width="33" height="29" viewBox="0 0 33 29"><rect x="1" y="5" width="27" height="23" fill="url(#gwin)" stroke="#8c7c50" stroke-width="2"/><rect x="1" y="5" width="27" height="6" fill="url(#gtb)"/><path d="M17 16L22 11" stroke="#111" stroke-width="2.2"/><path d="M19 7L26 14" stroke="#1e8a3a" stroke-width="7" stroke-linecap="round"/><path d="M22.5 3.5L30 11" stroke="#5cba50" stroke-width="6" stroke-linecap="round"/></svg>
<svg style="left:1448px;top:90px" width="4" height="28" viewBox="0 0 4 28"><rect x="0" y="0" width="4" height="4" fill="#a59f8c"/><rect x="0" y="0" width="2" height="2" fill="#d8d2c4"/><rect x="2" y="2" width="2" height="2" fill="#7f7762"/><rect x="0" y="8" width="4" height="4" fill="#a59f8c"/><rect x="0" y="8" width="2" height="2" fill="#d8d2c4"/><rect x="2" y="10" width="2" height="2" fill="#7f7762"/><rect x="0" y="16" width="4" height="4" fill="#a59f8c"/><rect x="0" y="16" width="2" height="2" fill="#d8d2c4"/><rect x="2" y="18" width="2" height="2" fill="#7f7762"/><rect x="0" y="24" width="4" height="4" fill="#a59f8c"/><rect x="0" y="24" width="2" height="2" fill="#d8d2c4"/><rect x="2" y="26" width="2" height="2" fill="#7f7762"/></svg>
<svg style="left:1459px;top:88px" width="32" height="31" viewBox="0 0 32 31"><g fill="#2d5fb0"><rect x="0" y="5" width="4" height="3"/><rect x="0" y="11" width="4" height="3"/><rect x="0" y="17" width="4" height="3"/><rect x="0" y="23" width="4" height="3"/><rect x="28" y="5" width="4" height="3"/><rect x="28" y="11" width="4" height="3"/><rect x="28" y="17" width="4" height="3"/><rect x="28" y="23" width="4" height="3"/><rect x="6" y="27" width="2" height="4"/><rect x="12" y="27" width="2" height="4"/><rect x="18" y="27" width="2" height="4"/><rect x="24" y="27" width="2" height="4"/></g><rect x="7" y="5" width="18" height="20" fill="#e8eef8" stroke="#2d5fb0" stroke-width="2"/><path d="M12 1H20V13H24L16 21L8 13H12Z" fill="#3a68b0"/></svg>
<svg style="left:1498px;top:90px" width="4" height="28" viewBox="0 0 4 28"><rect x="0" y="0" width="4" height="4" fill="#a59f8c"/><rect x="0" y="0" width="2" height="2" fill="#d8d2c4"/><rect x="2" y="2" width="2" height="2" fill="#7f7762"/><rect x="0" y="8" width="4" height="4" fill="#a59f8c"/><rect x="0" y="8" width="2" height="2" fill="#d8d2c4"/><rect x="2" y="10" width="2" height="2" fill="#7f7762"/><rect x="0" y="16" width="4" height="4" fill="#a59f8c"/><rect x="0" y="16" width="2" height="2" fill="#d8d2c4"/><rect x="2" y="18" width="2" height="2" fill="#7f7762"/><rect x="0" y="24" width="4" height="4" fill="#a59f8c"/><rect x="0" y="24" width="2" height="2" fill="#d8d2c4"/><rect x="2" y="26" width="2" height="2" fill="#7f7762"/></svg>
<svg style="left:1509px;top:89px" width="32" height="28" viewBox="0 0 32 28"><path d="M16 0L32 13H28V28H20V15H12V28H4V13H0Z" fill="#555"/></svg>
<div style="left:1545.4px;top:91px;font-size:30px;line-height:30px;color:#000;font-weight:normal;">Welcome</div>
<svg style="left:1682px;top:89px" width="28" height="28" viewBox="0 0 28 28"><circle cx="14" cy="14" r="11.5" fill="none" stroke="#555" stroke-width="3.5"/><path d="M14 7V15H20" fill="none" stroke="#555" stroke-width="2.5"/><path d="M0 12L6 10L4 17Z" fill="#f0f0f0"/></svg>
<div style="left:1716.4px;top:91px;font-size:30px;line-height:30px;color:#000;font-weight:normal;transform:scaleX(0.9419);transform-origin:0 0;">Recent</div>
<svg style="left:1819px;top:89px" width="29" height="28" viewBox="0 0 29 28"><rect x="0" y="0" width="8" height="8" fill="#555"/><rect x="10" y="0" width="8" height="8" fill="#555"/><rect x="20" y="0" width="8" height="8" fill="#555"/><rect x="0" y="10" width="8" height="8" fill="#555"/><rect x="10" y="10" width="8" height="8" fill="#555"/><rect x="20" y="10" width="8" height="8" fill="#555"/><rect x="0" y="20" width="8" height="8" fill="#555"/><rect x="10" y="20" width="8" height="8" fill="#555"/><rect x="20" y="20" width="8" height="8" fill="#555"/></svg>
<div style="left:1852.8px;top:91px;font-size:30px;line-height:30px;color:#000;font-weight:normal;transform:scaleX(0.9882);transform-origin:0 0;">Tools</div>
<svg style="left:1935px;top:89px" width="28" height="28" viewBox="0 0 28 28"><path d="M11 0H17V8H22L14 16L6 8H11Z" fill="#555"/><path d="M2 14V26H26V14" fill="none" stroke="#555" stroke-width="4"/></svg>
<div style="left:1967.0px;top:91px;font-size:30px;line-height:30px;color:#000;font-weight:normal;transform:scaleX(1.0135);transform-origin:0 0;">Install</div>
<svg style="left:2059px;top:89px" width="28" height="28" viewBox="0 0 28 28"><g fill="#555"><circle cx="14" cy="14" r="10"/><rect x="11" y="0" width="6" height="28" transform="rotate(0 14 14)"/><rect x="11" y="0" width="6" height="28" transform="rotate(45 14 14)"/><rect x="11" y="0" width="6" height="28" transform="rotate(90 14 14)"/><rect x="11" y="0" width="6" height="28" transform="rotate(135 14 14)"/></g><circle cx="14" cy="14" r="4" fill="#f0f0f0"/></svg>
<div style="left:2092.4px;top:91px;font-size:30px;line-height:30px;color:#000;font-weight:normal;transform:scaleX(0.9553);transform-origin:0 0;">Preferences</div>
<svg style="left:2982px;top:90px" width="4" height="28" viewBox="0 0 4 28"><rect x="0" y="0" width="4" height="4" fill="#a59f8c"/><rect x="0" y="0" width="2" height="2" fill="#d8d2c4"/><rect x="2" y="2" width="2" height="2" fill="#7f7762"/><rect x="0" y="8" width="4" height="4" fill="#a59f8c"/><rect x="0" y="8" width="2" height="2" fill="#d8d2c4"/><rect x="2" y="10" width="2" height="2" fill="#7f7762"/><rect x="0" y="16" width="4" height="4" fill="#a59f8c"/><rect x="0" y="16" width="2" height="2" fill="#d8d2c4"/><rect x="2" y="18" width="2" height="2" fill="#7f7762"/><rect x="0" y="24" width="4" height="4" fill="#a59f8c"/><rect x="0" y="24" width="2" height="2" fill="#d8d2c4"/><rect x="2" y="26" width="2" height="2" fill="#7f7762"/></svg>
<svg style="left:2996px;top:89px" width="29" height="28" viewBox="0 0 29 28"><rect x="1" y="4" width="24" height="23" fill="#e6f1fb" stroke="#7a6a4a" stroke-width="2"/><rect x="1" y="4" width="20" height="5" fill="#4a86cc"/><path d="M10 9V27M1 17H25" stroke="#7a6a4a" stroke-width="2"/><path d="M21 0L28 7L21 14L14 7Z" fill="#f8eebf" stroke="#c9a43c" stroke-width="2"/></svg>
<div style="left:3032px;top:82px;width:2px;height:42px;background:#8c8c8c;"></div>
<svg style="left:3043px;top:89px" width="28" height="28" viewBox="0 0 28 28"><path d="M27 1C17 1 10 8 7 15L12 20C19 17 27 10 27 1Z" fill="#d6e4f7" stroke="#2d5fb0" stroke-width="2.5"/><path d="M7 15L1 16L5 11M12 20L11 27L16 22M6 21L1 27" stroke="#2d5fb0" stroke-width="2.5" fill="none"/><circle cx="18" cy="10" r="3" fill="#2d5fb0"/></svg>
<div style="left:3076.6px;top:91px;font-size:30px;line-height:30px;color:#000;font-weight:normal;transform:scaleX(0.9585);transform-origin:0 0;">Launcher</div>
<svg style="left:3210px;top:89px" width="28" height="28" viewBox="0 0 28 28"><path d="M9 1C3 1 5 6 5 10C5 13 1 14 1 14C1 14 5 15 5 18C5 22 3 27 9 27" fill="none" stroke="#2a6fd0" stroke-width="4"/><path d="M19 1C25 1 23 6 23 10C23 13 27 14 27 14C27 14 23 15 23 18C23 22 25 27 19 27" fill="none" stroke="#2a6fd0" stroke-width="4"/></svg>
<div style="left:3243.9px;top:91px;font-size:30px;line-height:30px;color:#000;font-weight:normal;transform:scaleX(0.9689);transform-origin:0 0;">Simplicity IDE</div>
<div style="left:3431px;top:80px;width:137px;height:46px;background:#c4ddf2;border:1px solid #99d1ff"></div>
<svg style="left:3437px;top:89px" width="30" height="30" viewBox="0 0 30 30"><g stroke="#2f7f6f" stroke-width="2" fill="none" stroke-linecap="round"><path d="M9 8V1M15 8L18 5V2M8 10H1M8 16L4 18M20 10L23 9L26 11H28M22 17L26 18L28 20M11 21V25L13 28M17 23L18 27L20 29"/></g><ellipse cx="16.5" cy="16" rx="6.8" ry="8.3" transform="rotate(-42 16.5 16)" fill="#b2d89c" stroke="#1e7aa0" stroke-width="2"/><ellipse cx="10.5" cy="9.5" rx="3" ry="2.2" transform="rotate(-30 10.5 9.5)" fill="#d8ecc8" stroke="#1e7aa0" stroke-width="1.6"/><path d="M13 12L20 20" stroke="#4c9a4a" stroke-width="2"/></svg>
<div style="left:3470.5px;top:91px;font-size:30px;line-height:30px;color:#000;font-weight:normal;transform:scaleX(1.0212);transform-origin:0 0;">Debug</div>
<svg style="left:3571px;top:87px" width="32" height="28" viewBox="0 0 32 28"><path d="M0 17H9L12 2L16 27L19 11L22 17H32" fill="none" stroke="#2a6fd0" stroke-width="3.5"/></svg>
<div style="left:3607.0px;top:91px;font-size:30px;line-height:30px;color:#000;font-weight:normal;transform:scaleX(0.9600);transform-origin:0 0;">Energy Profiler</div>
<svg style="left:-5px;top:200px" width="20" height="13" viewBox="0 0 20 13"><path d="M2 2L10.0 11L18 2" fill="none" stroke="#333" stroke-width="3.2"/></svg>
<svg style="left:29px;top:190px" width="31" height="31" viewBox="0 0 31 31"><g fill="#2a5a9a"><rect x="6" y="0" width="2" height="4"/><rect x="6" y="27" width="2" height="4"/><rect x="0" y="6" width="4" height="2"/><rect x="27" y="6" width="4" height="2"/><rect x="11" y="0" width="2" height="4"/><rect x="11" y="27" width="2" height="4"/><rect x="0" y="11" width="4" height="2"/><rect x="27" y="11" width="4" height="2"/><rect x="16" y="0" width="2" height="4"/><rect x="16" y="27" width="2" height="4"/><rect x="0" y="16" width="4" height="2"/><rect x="27" y="16" width="4" height="2"/><rect x="21" y="0" width="2" height="4"/><rect x="21" y="27" width="2" height="4"/><rect x="0" y="21" width="4" height="2"/><rect x="27" y="21" width="4" height="2"/></g><rect x="4" y="4" width="23" height="23" fill="#fff" stroke="#2a5a9a" stroke-width="2"/><rect x="8" y="8" width="15" height="15" fill="#8cc63f"/></svg>
<div style="left:65.8px;top:193px;font-size:30px;line-height:30px;color:#000;font-weight:normal;transform:scaleX(0.9490);transform-origin:0 0;">Silicon Labs ARM MCU: SI917-SB00</div>
<svg style="left:35px;top:245px" width="20" height="12" viewBox="0 0 20 12"><path d="M2 2L10.0 10L18 2" fill="none" stroke="#333" stroke-width="3.2"/></svg>
<svg style="left:71px;top:236px" width="31" height="30" viewBox="0 0 31 30"><rect x="19" y="0.5" width="3.5" height="17" transform="rotate(0 20.75 9)" fill="#f2b93a" stroke="#a07030" stroke-width="1"/><rect x="19" y="0.5" width="3.5" height="17" transform="rotate(45 20.75 9)" fill="#f2b93a" stroke="#a07030" stroke-width="1"/><rect x="19" y="0.5" width="3.5" height="17" transform="rotate(90 20.75 9)" fill="#f2b93a" stroke="#a07030" stroke-width="1"/><rect x="19" y="0.5" width="3.5" height="17" transform="rotate(135 20.75 9)" fill="#f2b93a" stroke="#a07030" stroke-width="1"/><circle cx="20.75" cy="9" r="6" fill="#f6c444"/><circle cx="20.75" cy="9" r="1.8" fill="#e8d8b8"/><rect x="0.5" y="14" width="16" height="14" fill="#b8901c"/><rect x="3" y="16" width="4" height="10" fill="#f8e8a8"/><rect x="10" y="16" width="4" height="10" fill="#f8e8a8"/><path d="M3 2H13M3 2V7M3 2L8 7" stroke="#1f5a9a" stroke-width="2.5" fill="none"/><path d="M26 26H17M26 26V21M26 26L21 21" stroke="#1f5a9a" stroke-width="2.5" fill="none"/></svg>
<div style="left:106.3px;top:237px;font-size:30px;line-height:30px;color:#000;font-weight:normal;transform:scaleX(0.9464);transform-origin:0 0;">wifi_power_save_deep_sleep.axf</div>
<div style="left:107px;top:272px;width:442px;height:44px;background:#d9d9d9;"></div>
<svg style="left:113px;top:282px" width="25" height="22" viewBox="0 0 25 22"><g fill="#2b62a8"><rect x="0" y="0" width="25" height="5"/><rect x="0" y="8" width="25" height="5"/><rect x="0" y="16" width="25" height="5"/></g><g fill="#8fb4e0"><rect x="0" y="3" width="25" height="2"/><rect x="0" y="11" width="25" height="2"/><rect x="0" y="19" width="25" height="2"/></g></svg>
<div style="left:144.9px;top:281px;font-size:30px;line-height:30px;color:#000;font-weight:normal;transform:scaleX(0.9657);transform-origin:0 0;">main() at main.c:30 0x8212320</div>
<svg style="left:113px;top:326px" width="25" height="22" viewBox="0 0 25 22"><g fill="#2b62a8"><rect x="0" y="0" width="25" height="5"/><rect x="0" y="8" width="25" height="5"/><rect x="0" y="16" width="25" height="5"/></g><g fill="#8fb4e0"><rect x="0" y="3" width="25" height="2"/><rect x="0" y="11" width="25" height="2"/><rect x="0" y="19" width="25" height="2"/></g></svg>
<div style="left:0px;top:184px;width:930px;height:1991px;overflow:hidden"><div style="position:absolute;left:144.9px;top:142px;white-space:pre;font-size:30px;line-height:30px;color:#000;font-weight:normal;transform:scaleX(0.9260);transform-origin:0 0;">RSI_Default_Reset_Handler() at startup_RS1xxxx.c:343 0x8220030</div></div>
<svg style="left:113px;top:370px" width="25" height="22" viewBox="0 0 25 22"><g fill="#2b62a8"><rect x="0" y="0" width="25" height="5"/><rect x="0" y="8" width="25" height="5"/><rect x="0" y="16" width="25" height="5"/></g><g fill="#8fb4e0"><rect x="0" y="3" width="25" height="2"/><rect x="0" y="11" width="25" height="2"/><rect x="0" y="19" width="25" height="2"/></g></svg>
<div style="left:147.8px;top:370px;font-size:30px;line-height:30px;color:#000;font-weight:normal;">&lt;unknown&gt;() [Unknown] at 0x301698</div>
<svg style="left:113px;top:415px" width="25" height="22" viewBox="0 0 25 22"><g fill="#2b62a8"><rect x="0" y="0" width="25" height="5"/><rect x="0" y="8" width="25" height="5"/><rect x="0" y="16" width="25" height="5"/></g><g fill="#8fb4e0"><rect x="0" y="3" width="25" height="2"/><rect x="0" y="11" width="25" height="2"/><rect x="0" y="19" width="25" height="2"/></g></svg>
<div style="left:147.8px;top:414px;font-size:30px;line-height:30px;color:#000;font-weight:normal;transform:scaleX(0.9940);transform-origin:0 0;">&lt;unknown&gt;() [Unknown] at 0xaa96698a</div>
<div style="left:930px;top:184px;width:4px;height:2000px;background:#f0f0f0;"></div>
<div style="left:934px;top:135px;width:1px;height:2060px;background:#a5a5a5;"></div>
<div style="left:1034px;top:488px;width:1695px;height:114px;background:#e0e0e0;"></div>
<div style="left:1034px;top:678px;width:1695px;height:114px;background:#e0e0e0;"></div>
<div style="left:1034px;top:1362px;width:1695px;height:304px;background:#e0e0e0;"></div>
<div style="left:1034px;top:1020px;width:1695px;height:38px;background:#e8f2fe;"></div>
<div style="left:1034px;top:868px;width:18px;height:38px;background:#c7dbae;"></div>
<div style="left:2474px;top:184px;width:1px;height:1460px;background:#b0b4b9;"></div>
<svg style="left:950px;top:830px" width="24" height="814"><defs><pattern id="ck" width="4" height="4" patternUnits="userSpaceOnUse"><rect width="4" height="4" fill="#fff"/><rect x="2" y="0" width="2" height="2" fill="#0060d8"/><rect x="0" y="2" width="2" height="2" fill="#0060d8"/></pattern></defs><rect width="24" height="814" fill="url(#ck)"/><rect width="24" height="2" fill="#0068d8"/></svg>
<svg style="left:950px;top:876px" width="15" height="18" viewBox="0 0 15 18"><path d="M0 5H7V0L14 9L7 18V13H0Z" fill="#3f76b5" stroke="#1f4f8a" stroke-width="1"/></svg>
<svg style="left:1010px;top:838px" width="19" height="19" viewBox="0 0 19 19"><circle cx="9.5" cy="9.5" r="8.3" fill="#e4ebf3" stroke="#a8b4c4" stroke-width="2"/><path d="M5 9.5H14" stroke="#3c4c64" stroke-width="2"/></svg>
<div class="code" style="left:1034px;top:187px;width:1695px;height:1457px;overflow:hidden;color:#000"><span class="d"> * www.silabs.com/about-us/legal/master-software-license-agreement. This</span>
<span class="d"> * software is distributed to you in Source Code format and is governed by the</span>
<span class="d"> * sections of the MSLA applicable to Source Code.</span>
<span class="d"> *</span>
<span class="d"> ******************************************************************************/</span>
<span class="k">#include</span> <span class="s">&quot;sl_component_catalog.h&quot;</span>
<span class="k">#include</span> <span class="s">&quot;sl_system_init.h&quot;</span>
<span class="k">#include</span> <span class="s">&quot;app.h&quot;</span>
<span class="k">#if</span> defined(SL_CATALOG_POWER_MANAGER_PRESENT)
<span class="k">#include</span> <span class="s">&quot;sl_power_manager.h&quot;</span>
<span class="k">#endif</span>
<span class="k">#if</span> defined(SL_CATALOG_KERNEL_PRESENT)
<span class="k">#include</span> <span class="s">&quot;sl_system_kernel.h&quot;</span>
<span class="k">#else</span> <span class="c">// SL_CATALOG_KERNEL_PRESENT</span>
<span class="k">#include</span> <span class="s">&quot;sl_system_process_action.h&quot;</span>
<span class="k">#endif</span> <span class="c">// SL_CATALOG_KERNEL_PRESENT</span>

<span class="k">int</span> <span class="b">main</span>(<span class="k">void</span>)
{
  <span class="c">// Initialize Silicon Labs device, system, service(s) and protocol stack(s).</span>
  <span class="c">// Note that if the kernel is present, processing task(s) will be created by</span>
  <span class="c">// this call.</span>
  <span class="f">sl_system_init</span>();

  <span class="c">// Initialize the application. For example, create periodic timer(s) or</span>
  <span class="c">// task(s) if the kernel is present.</span>
  app_init();

<span class="k">#if</span> defined(SL_CATALOG_KERNEL_PRESENT)
  <span class="c">// Start the kernel. Task(s) created in app_init() will start running.</span>
  <span class="f">sl_system_kernel_start</span>();
<span class="k">#else</span> <span class="c">// SL_CATALOG_KERNEL_PRESENT</span>
  <span class="k">while</span> (1) {
    <span class="c">// Do not remove this call: Silicon Labs components process action routine</span>
    <span class="c">// must be called from the super loop.</span>
    sl_system_process_action();

    <span class="c">// Application process.</span>
    app_process_action();</div>
<div class="code" style="left:970px;top:187px;width:40px;height:1457px;overflow:hidden;color:#787878;text-align:right">12
13
14
15
16
17
18
19
20
21
22
23
24
25
26
27
28
29
30
31
32
33
34
35
36
37
38
39
40
41
42
43
44
45
46
47
48
49
50</div>
<div style="left:2730px;top:184px;width:42px;height:1461px;background:#f0f0f0;"></div>
<div style="left:2730px;top:476px;width:42px;height:897px;background:#cdcdcd;"></div>
<svg style="left:2740px;top:196px" width="20" height="16" viewBox="0 0 20 16"><path d="M0 10L10 0L20 10V16L10 6L0 16Z" fill="#606060"/></svg>
<svg style="left:2741px;top:1616px" width="19" height="16" viewBox="0 0 19 16"><path d="M0 0L9.5 9.5L19 0V6L9.5 16L0 6Z" fill="#606060"/></svg>
<div style="left:2776px;top:920px;width:17px;height:9px;background:#eef5e9;border:1px solid #cfe0b8"></div>
<div style="left:1030px;top:1645px;width:1742px;height:43px;background:#f0f0f0;"></div>
<svg style="left:1042px;top:1657px" width="16" height="18" viewBox="0 0 16 18"><path d="M16 0L6 9L16 18H10L0 9L10 0Z" fill="#bdbdbd"/></svg>
<svg style="left:2700px;top:1657px" width="16" height="18" viewBox="0 0 16 18"><path d="M0 0L10 9L0 18H6L16 9L6 0Z" fill="#bdbdbd"/></svg>
<svg style="left:3527px;top:186px" width="32" height="33" viewBox="0 0 32 33"><path d="M4 12C8 6 14 4 18 2M4 26L16 6" stroke="#b0b0b0" stroke-width="2.5" fill="none"/><rect x="4" y="14" width="26" height="16" fill="#f3f3f3" stroke="#c8c8c8" stroke-width="2"/><path d="M8 25H12M15 25H19M22 25H26" stroke="#b0b0b0" stroke-width="3"/></svg>
<div style="left:3563px;top:184px;width:39px;height:37px;background:#cce4f7;border:1px solid #99d1ff"></div>
<svg style="left:3566px;top:190px" width="33" height="28" viewBox="0 0 33 28"><path d="M1 10H10V5L18 12L10 19V14H1Z" fill="#f3d36a" stroke="#b58a18" stroke-width="1.5"/><path d="M23 26V2M19 6L23 1L27 6" stroke="#5a7ab8" stroke-width="2" fill="none"/><path d="M23 12H29M23 23H29" stroke="#5a7ab8" stroke-width="2"/><rect x="28" y="9" width="5" height="5" fill="#e04a60"/><rect x="28" y="20" width="5" height="5" fill="#e04a60"/><rect x="28" y="1" width="4" height="2" fill="#5a7ab8"/></svg>
<svg style="left:3609px;top:190px" width="27" height="27" viewBox="0 0 27 27"><rect x="1" y="1" width="20" height="20" fill="#efefef" stroke="#c8c8c8" stroke-width="2"/><rect x="6" y="6" width="20" height="20" fill="#efefef" stroke="#bdbdbd" stroke-width="2"/><path d="M10 16H22" stroke="#999" stroke-width="2.5"/></svg>
<div style="left:3641px;top:184px;width:39px;height:37px;background:#cce4f7;border:1px solid #99d1ff"></div>
<svg style="left:3647px;top:189px" width="28" height="27" viewBox="0 0 28 27"><rect x="1" y="1" width="26" height="25" rx="3" fill="#3f8a3a" stroke="#23601f" stroke-width="2"/><text x="4" y="21" font-family="Liberation Sans" font-size="17" font-weight="bold" fill="#fff">Ff</text></svg>
<div style="left:3682px;top:186px;width:1px;height:34px;background:#8c8c8c;"></div>
<svg style="left:3693px;top:189px" width="31" height="29" viewBox="0 0 31 29"><rect x="1" y="6" width="27" height="22" fill="url(#gwin)" stroke="#8c7c50" stroke-width="2"/><rect x="1" y="6" width="22" height="6" fill="url(#gtb)"/><path d="M23.5 0.5L30 7L23.5 13.5L17 7Z" fill="#fbf3cf" stroke="#b08820" stroke-width="2"/><path d="M23.5 3.5V10.5M20 7H27" stroke="#b08820" stroke-width="1.4"/><path d="M22 16Q20 25 8 27" fill="none" stroke="#f2dfa0" stroke-width="1.5"/></svg>
<div style="left:2824.0px;top:235px;font-size:30px;line-height:30px;color:#000;font-weight:normal;">Name</div>
<div style="left:3133.8px;top:235px;font-size:30px;line-height:30px;color:#000;font-weight:normal;">Type</div>
<div style="left:3444.4px;top:235px;font-size:30px;line-height:30px;color:#000;font-weight:normal;">Value</div>
<div style="left:3127px;top:222px;width:1px;height:954px;background:#e3e3e3;"></div>
<div style="left:3437px;top:222px;width:1px;height:954px;background:#e3e3e3;"></div>
<div style="left:2818px;top:316px;width:900px;height:1px;background:#e3e3e3;"></div>
<div style="left:2818px;top:360px;width:900px;height:1px;background:#e3e3e3;"></div>
<div style="left:2818px;top:404px;width:900px;height:1px;background:#e3e3e3;"></div>
<div style="left:2818px;top:448px;width:900px;height:1px;background:#e3e3e3;"></div>
<div style="left:2818px;top:492px;width:900px;height:1px;background:#e3e3e3;"></div>
<div style="left:2818px;top:536px;width:900px;height:1px;background:#e3e3e3;"></div>
<div style="left:2818px;top:580px;width:900px;height:1px;background:#e3e3e3;"></div>
<div style="left:2818px;top:624px;width:900px;height:1px;background:#e3e3e3;"></div>
<div style="left:2818px;top:668px;width:900px;height:1px;background:#e3e3e3;"></div>
<div style="left:2818px;top:712px;width:900px;height:1px;background:#e3e3e3;"></div>
<div style="left:2818px;top:756px;width:900px;height:1px;background:#e3e3e3;"></div>
<div style="left:2818px;top:800px;width:900px;height:1px;background:#e3e3e3;"></div>
<div style="left:2818px;top:844px;width:900px;height:1px;background:#e3e3e3;"></div>
<div style="left:2818px;top:888px;width:900px;height:1px;background:#e3e3e3;"></div>
<div style="left:2818px;top:932px;width:900px;height:1px;background:#e3e3e3;"></div>
<div style="left:2818px;top:976px;width:900px;height:1px;background:#e3e3e3;"></div>
<div style="left:2818px;top:1020px;width:900px;height:1px;background:#e3e3e3;"></div>
<div style="left:2818px;top:1064px;width:900px;height:1px;background:#e3e3e3;"></div>
<div style="left:2818px;top:1108px;width:900px;height:1px;background:#e3e3e3;"></div>
<div style="left:2818px;top:1152px;width:900px;height:1px;background:#e3e3e3;"></div>
<div style="left:2818px;top:1178px;width:900px;height:42px;background:#f0f0f0;"></div>
<div style="left:2861px;top:1178px;width:629px;height:42px;background:#cdcdcd;"></div>
<svg style="left:2830px;top:1189px" width="17" height="18" viewBox="0 0 17 18"><path d="M17 0L7 9L17 18H10L0 9L10 0Z" fill="#606060"/></svg>
<div style="left:2818px;top:1648px;width:900px;height:43px;background:#f0f0f0;"></div>
<svg style="left:2830px;top:1659px" width="17" height="18" viewBox="0 0 17 18"><path d="M17 0L7 9L17 18H10L0 9L10 0Z" fill="#bdbdbd"/></svg>
<div style="left:2812px;top:135px;width:1px;height:1558px;background:#a5a5a5;"></div>
<div style="left:2812px;top:1692px;width:920px;height:1px;background:#a5a5a5;"></div>
<div style="left:944px;top:1692px;width:1859px;height:1px;background:#a5a5a5;"></div>
<div style="left:949.4px;top:1765px;font-size:30px;line-height:30px;color:#3c3c3c;font-weight:normal;">Program Output Console</div>
<div style="left:950px;top:1800px;width:2780px;height:1px;background:#b9b9b9;"></div>
<svg style="left:3361px;top:1709px" width="27" height="28" viewBox="0 0 27 28"><path d="M4 4L23 24M23 4L4 24" stroke="#4a4a4a" stroke-width="8" stroke-linecap="round"/><path d="M4 4L23 24M23 4L4 24" stroke="#7a7a7a" stroke-width="5" stroke-linecap="round"/></svg>
<div style="left:3395px;top:1706px;width:1px;height:34px;background:#8c8c8c;"></div>
<svg style="left:3406px;top:1707px" width="31" height="30" viewBox="0 0 31 30"><path d="M1 1H15L20 6V26H1Z" fill="#f3f3f3" stroke="#c8c8c8" stroke-width="2"/><path d="M4 7H12M4 11H16M4 15H16M4 19H14" stroke="#c4c4c4" stroke-width="2"/><path d="M19 18L29 28M29 18L19 28" stroke="#999" stroke-width="4"/></svg>
<svg style="left:3445px;top:1708px" width="30" height="31" viewBox="0 0 30 31"><rect x="3" y="1" width="26" height="26" fill="#e9f3fb" stroke="#9a8a5a" stroke-width="2"/><path d="M21 1V27" stroke="#6a7fa8" stroke-width="3"/><rect x="0" y="15" width="16" height="15" rx="2" fill="#e8b838" stroke="#a06a10" stroke-width="2"/><path d="M3 15V11C3 5 13 5 13 11V15" fill="none" stroke="#a06a10" stroke-width="3"/></svg>
<svg style="left:3484px;top:1707px" width="30" height="28" viewBox="0 0 30 28"><path d="M1 1H14L20 7V26H1Z" fill="#e9f1fb" stroke="#9a8a5a" stroke-width="2"/><path d="M4 7H12M4 11H14M4 15H10M4 19H8" stroke="#3a64a8" stroke-width="2"/><path d="M26 4V17H15V13L9 18L15 24V20H29V4Z" fill="#f3d36a" stroke="#b58a18" stroke-width="1.5"/></svg>
<div style="left:3520px;top:1706px;width:1px;height:34px;background:#8c8c8c;"></div>
<svg style="left:3533px;top:1710px" width="29" height="27" viewBox="0 0 29 27"><rect x="1" y="7" width="25" height="19" fill="#eaf4fb" stroke="#8a8a7a" stroke-width="2"/><rect x="1" y="7" width="25" height="4" fill="#4a8ad0"/><ellipse cx="20" cy="8" rx="7" ry="5" transform="rotate(-45 20 8)" fill="#3aa048" stroke="#1e6a28" stroke-width="1.5"/><path d="M15 12L11 17" stroke="#333" stroke-width="2"/></svg>
<svg style="left:3573px;top:1709px" width="27" height="26" viewBox="0 0 27 26"><rect x="1" y="1" width="25" height="19" rx="2" fill="#dbeefc" stroke="#3566b0" stroke-width="2.5"/><path d="M6 8H14M6 12H20" stroke="#1d3f86" stroke-width="2"/><rect x="9" y="21" width="9" height="2" fill="#3566b0"/><rect x="3" y="23" width="21" height="3" fill="#3566b0"/></svg>
<svg style="left:3616px;top:1719px" width="17" height="9" viewBox="0 0 17 9"><path d="M0 0H17L8.5 9Z" fill="#222"/></svg>
<svg style="left:3651px;top:1708px" width="31" height="29" viewBox="0 0 31 29"><rect x="1" y="6" width="27" height="22" fill="url(#gwin)" stroke="#8c7c50" stroke-width="2"/><rect x="1" y="6" width="22" height="6" fill="url(#gtb)"/><path d="M23.5 0.5L30 7L23.5 13.5L17 7Z" fill="#fbf3cf" stroke="#b08820" stroke-width="2"/><path d="M23.5 3.5V10.5M20 7H27" stroke="#b08820" stroke-width="1.4"/><path d="M22 16Q20 25 8 27" fill="none" stroke="#f2dfa0" stroke-width="1.5"/></svg>
<svg style="left:3696px;top:1719px" width="18" height="9" viewBox="0 0 18 9"><path d="M0 0H18L9.0 9Z" fill="#222"/></svg></body></html>
